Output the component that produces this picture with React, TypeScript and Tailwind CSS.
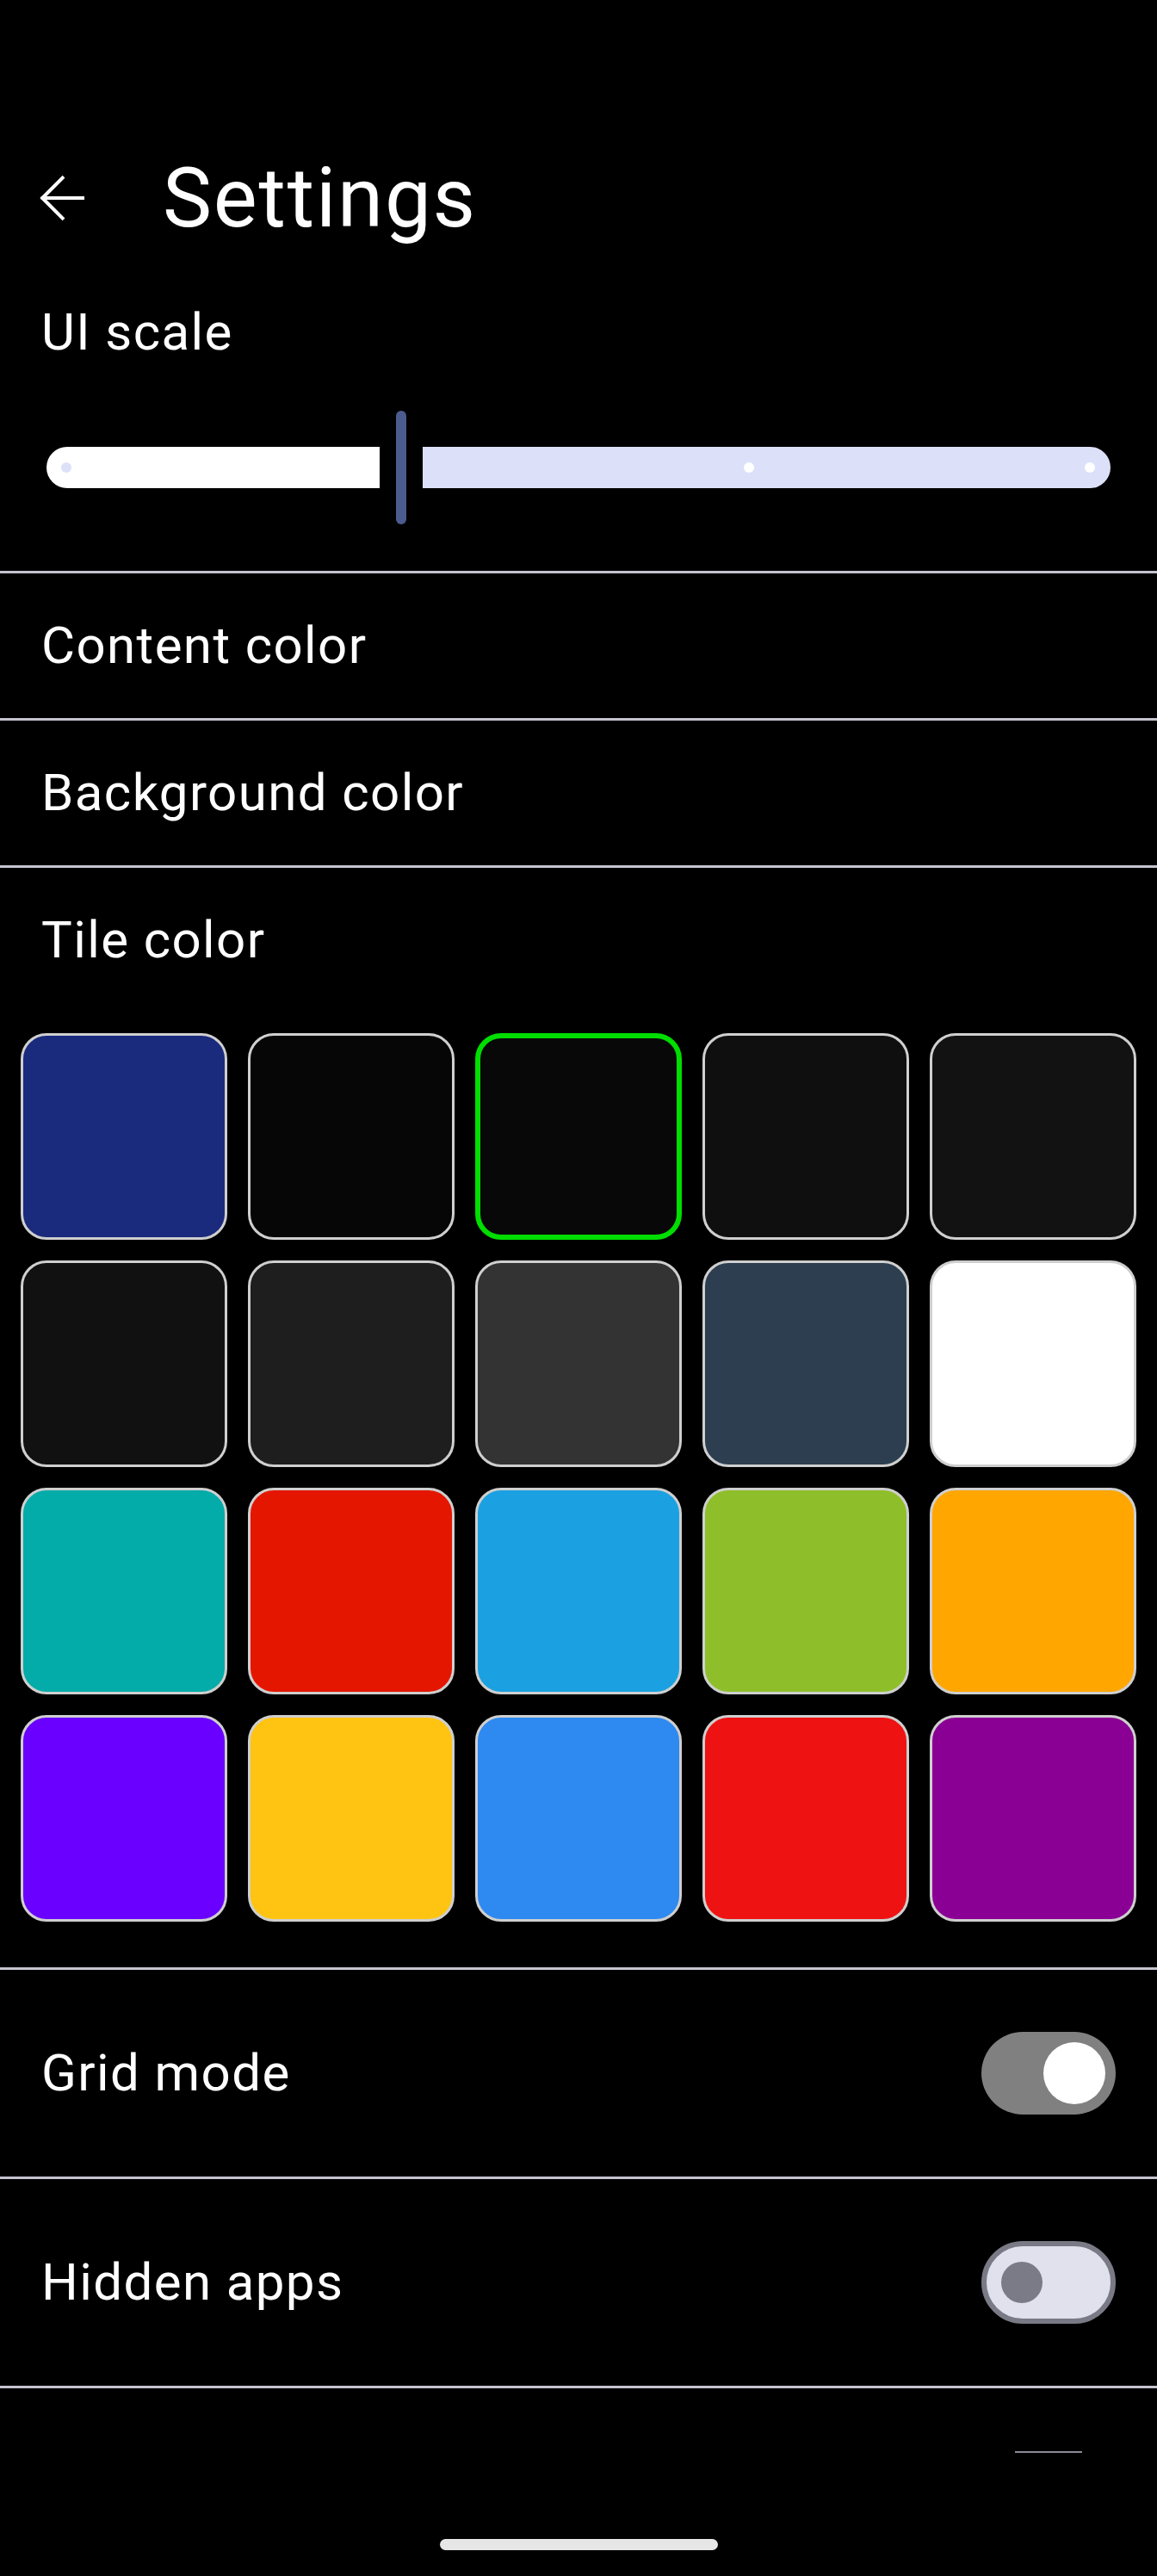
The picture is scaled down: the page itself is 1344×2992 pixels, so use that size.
const tiles: { color: string; selected?: boolean }[] = [
  { color: "#1a2a7d" },
  { color: "#060606" },
  { color: "#080808", selected: true },
  { color: "#0f0f0f" },
  { color: "#121212" },
  { color: "#111111" },
  { color: "#1e1e1e" },
  { color: "#333333" },
  { color: "#2d3e50" },
  { color: "#ffffff" },
  { color: "#03aba9" },
  { color: "#e51600" },
  { color: "#1ba1e1" },
  { color: "#8ebf2a" },
  { color: "#ffa600" },
  { color: "#6a00ff" },
  { color: "#ffc411" },
  { color: "#2e89f0" },
  { color: "#ee1212" },
  { color: "#8b0094" },
];

function Divider() {
  return <div className="h-[3px] w-full bg-[#c4c4d0]" />;
}

function BackArrow() {
  return (
    <svg width="72" height="72" viewBox="0 0 24 24" fill="none" stroke="#ffffff" strokeWidth="1.35" strokeLinecap="square">
      <path d="M20 12H4.6" />
      <path d="M12.2 4.2 4.4 12l7.8 7.8" />
    </svg>
  );
}

function Slider() {
  return (
    <div className="flex h-[132px] items-center px-[54px]">
      <div className="flex h-[48px] w-[387px] items-center rounded-l-full rounded-r-[6px] bg-white pl-[17px]">
        <span className="h-[12px] w-[12px] rounded-full bg-[#dce1f9]" />
      </div>
      <div className="ml-[19px] h-[132px] w-[12px] rounded-full bg-[#4b5b8e]" />
      <div className="ml-[19px] flex h-[48px] flex-1 items-center justify-between rounded-l-[6px] rounded-r-full bg-[#dce1f9] pl-[373px] pr-[18px]">
        <span className="h-[12px] w-[12px] rounded-full bg-white" />
        <span className="h-[12px] w-[12px] rounded-full bg-white" />
      </div>
    </div>
  );
}

function Row({ label }: { label: string }) {
  return (
    <div className="flex h-[168px] items-center px-[48px] text-[60px] leading-[84px] tracking-[1.4px] text-white">
      {label}
    </div>
  );
}

function Toggle({ on }: { on: boolean }) {
  if (on) {
    return (
      <div className="flex h-[96px] w-[156px] items-center justify-end rounded-full bg-[#808080] pr-[12px]">
        <div className="h-[72px] w-[72px] rounded-full bg-white" />
      </div>
    );
  }
  return (
    <div className="flex h-[96px] w-[156px] items-center rounded-full border-[6px] border-[#7a7a86] bg-[#e1e1ee] pl-[17px]">
      <div className="h-[48px] w-[48px] rounded-full bg-[#7b7b87]" />
    </div>
  );
}

function SwitchRow({ label, on }: { label: string; on: boolean }) {
  return (
    <div className="flex h-[240px] items-center justify-between px-[48px]">
      <span className="text-[60px] leading-[84px] tracking-[1.4px] text-white">{label}</span>
      <Toggle on={on} />
    </div>
  );
}

export default function App() {
  return (
    <div className="flex min-h-[2992px] w-full flex-col bg-black font-[family-name:Roboto,sans-serif] text-white">
      <div className="h-[134px]" />
      <header className="flex h-[192px] items-center">
        <div className="ml-[36px]">
          <BackArrow />
        </div>
        <h1 className="ml-[81px] text-[96px] leading-[96px] font-normal tracking-[1.8px]">Settings</h1>
      </header>

      <div className="mt-[18px] px-[48px] text-[60px] leading-[84px] tracking-[1.4px]">UI scale</div>
      <div className="mt-[49px]">
        <Slider />
      </div>
      <div className="mt-[54px]">
        <Divider />
      </div>

      <Row label="Content color" />
      <Divider />
      <Row label="Background color" />
      <Divider />
      <Row label="Tile color" />

      <div className="grid grid-cols-5 gap-[24px] px-[24px] pt-[24px] pb-[53px]">
        {tiles.map((t, i) => (
          <div
            key={i}
            className={
              t.selected
                ? "h-[240px] rounded-[30px] border-[6px] border-[#00dd00]"
                : "h-[240px] rounded-[30px] border-[3px] border-[#cfcfcf]"
            }
            style={{ backgroundColor: t.color }}
          />
        ))}
      </div>

      <Divider />
      <SwitchRow label="Grid mode" on={true} />
      <Divider />
      <SwitchRow label="Hidden apps" on={false} />
      <Divider />

      <div className="flex justify-end pr-[87px] pt-[73px]">
        <div className="h-[2px] w-[78px] bg-[#8a8a96]" />
      </div>

      <div className="mt-auto flex justify-center pb-[30px]">
        <div className="h-[13px] w-[323px] rounded-full bg-[#e6e6e6]" />
      </div>
    </div>
  );
}
